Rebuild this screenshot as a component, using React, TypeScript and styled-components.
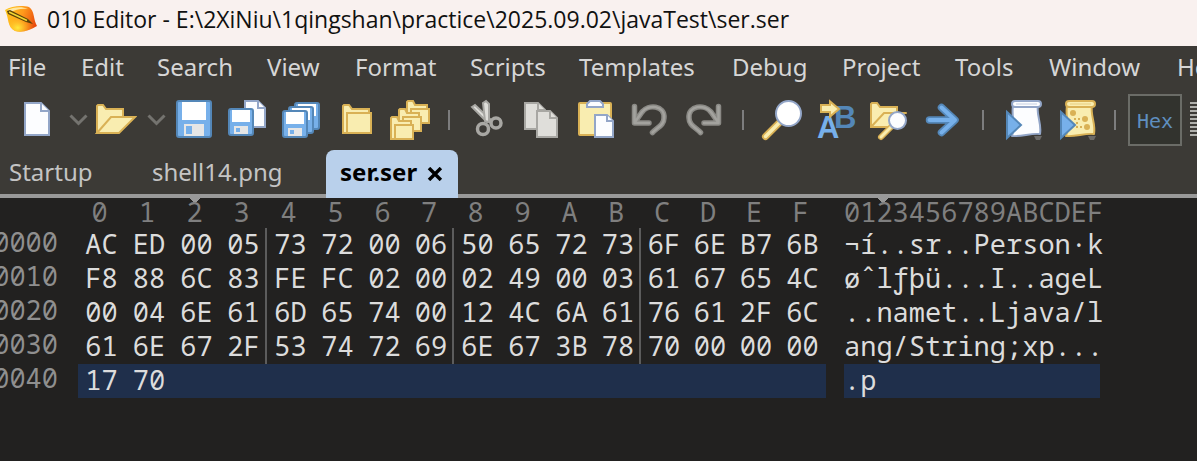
import React from "react";
import styled, { createGlobalStyle } from "styled-components";

const ui = `"Noto Sans", "Open Sans", sans-serif`;
const mono = `"Noto Sans Mono", "Droid Sans Mono", "DejaVu Sans Mono", monospace`;

const blue = "#77b0ea";
const blueEdge = "#5487b8";
const sand = "#f9edb0";
const sandEdge = "#d9b155";
const paper = "#fcfdff";
const paperEdge = "#93a6c8";
const grey = "#dfdeda";
const greyEdge = "#a8a7a3";

const GlobalStyle = createGlobalStyle`
  * { box-sizing: border-box; }
  body { margin: 0; background: #222120; font-family: ${ui}; }
`;

const Window = styled.div`
  display: flex;
  flex-direction: column;
  min-height: 100vh;
  overflow: hidden;
  background: #222120;
`;

const TitleBar = styled.header`
  display: flex;
  align-items: center;
  gap: 10px;
  height: 46px;
  padding: 0 5px 8px;
  background: #f9f1ef;
`;

const Title = styled.h1`
  margin: 0;
  font: 400 23px/36px "Open Sans", sans-serif;
  color: #111;
  white-space: nowrap;
`;

const MenuBar = styled.nav`
  display: grid;
  grid-template-columns: 73px 76px 110px 88px 115px 109px 153px 110px 113px 94px 128px auto;
  justify-content: start;
  height: 44px;
  padding-left: 8px;
  background: #3c3a36;
  overflow: hidden;
`;

const MenuButton = styled.button`
  padding: 0;
  border: 0;
  background: none;
  color: #d6d6d6;
  font: 400 24px/42px ${ui};
  height: 42px;
  text-align: left;
`;

const ToolBar = styled.div`
  display: flex;
  align-items: center;
  height: 60px;
  padding-left: 10px;
  background: #3c3a36;
  overflow: hidden;
`;

const ToolButton = styled.button<{ $narrow?: boolean }>`
  flex: none;
  display: flex;
  justify-content: center;
  width: ${(p) => (p.$narrow ? 24 : 54)}px;
  height: 44px;
  padding: 0;
  border: 0;
  background: none;
`;

const Separator = styled.div`
  flex: none;
  width: 24px;
  height: 20px;
  padding-left: 12px;

  &::before {
    content: "";
    display: block;
    width: 2px;
    height: 100%;
    background: #7d7d7e;
  }
`;

const HexButton = styled.button`
  flex: none;
  width: 54px;
  height: 52px;
  margin: 0 8px 0 2px;
  padding: 2px 0 0;
  border: 2px solid #6b6c67;
  background: #32332e;
  color: #5f8fc0;
  font: 400 20px/46px "DejaVu Sans Mono", monospace;
`;

const Tabs = styled.div`
  display: flex;
  height: 48px;
  background: linear-gradient(#3c3a36 44px, #999 44px);
`;

const Tab = styled.button<{ $active?: boolean }>`
  display: flex;
  align-items: center;
  gap: 9px;
  height: 48px;
  padding: 0 14px 4px;
  border: 0;
  border-radius: 8px 8px 0 0;
  background: ${(p) => (p.$active ? "#b9d0eb" : "none")};
  color: ${(p) => (p.$active ? "#000" : "#c4c4c4")};
  font: ${(p) => (p.$active ? 700 : 400)} 24px/44px ${ui};

  svg { margin-top: 4px; }
`;

const TabList = styled.div`
  display: grid;
  grid-template-columns: 142px 184px 132px;

  button:first-child { padding-left: 9px; }
  button:nth-child(2) { padding-left: 10px; }
`;

const Editor = styled.main`
  flex: 1;
  overflow: hidden;
`;

const Dump = styled.table`
  width: 1100px;
  table-layout: fixed;
  border-collapse: collapse;
  font: 400 27px/32px ${mono};
  color: #dcdcdc;
`;

const ColumnHead = styled.th<{ $text?: boolean; $marked?: boolean }>`
  height: 30px;
  padding: ${(p) => (p.$text ? "0 0 2px" : "0 4px 2px 0")};
  color: #7f7f7f;
  font-weight: 400;
  line-height: 28px;
  text-align: ${(p) => (p.$text ? "left" : "center")};
  white-space: pre;
  background: ${(p) =>
    p.$marked
      ? `conic-gradient(from -45deg at 50% 5px, #999 90deg, transparent 0) ${p.$text ? "34px" : "17px"} 0 / 10px 5px no-repeat`
      : "none"};
`;

const Offset = styled.th`
  height: 34px;
  padding: 0 20px 6px 0;
  color: #8f8f8f;
  font-weight: 400;
  line-height: 28px;
  direction: rtl;
  text-align: right;
`;

const Byte = styled.td<{ $selected: boolean; $divided: boolean }>`
  height: 34px;
  padding: 0 0 2px;
  text-align: center;
  background: ${(p) =>
    p.$selected
      ? "#1f2f4b"
      : p.$divided
        ? "linear-gradient(#5c5c5c, #5c5c5c) right / 2px 100% no-repeat"
        : "none"};
`;

const Text = styled.td<{ $selected: boolean }>`
  height: 34px;
  padding: 0 0 2px;
  white-space: pre;
  background: ${(p) => (p.$selected ? "#1f2f4b" : "none")};
`;

const Icon = ({ children }: { children: React.ReactNode }) => (
  <svg width="44" height="44" viewBox="0 0 44 44" fill="none" aria-hidden="true">
    {children}
  </svg>
);

const Page = ({ x, y, w, h, fill = paper, edge = paperEdge, fold = 7 }: {
  x: number; y: number; w: number; h: number; fill?: string; edge?: string; fold?: number;
}) => (
  <g fill={fill} stroke={edge} strokeWidth="2">
    <path d={`M${x} ${y}h${w - fold}l${fold} ${fold}v${h - fold}h${-w}z`} />
    <path d={`M${x + w - fold} ${y}v${fold}h${fold}`} />
  </g>
);

const Floppy = ({ x, y }: { x: number; y: number }) => (
  <g>
    <rect x={x + 1} y={y + 1} width="24" height="26" rx="2" fill={blue} stroke={blueEdge} strokeWidth="2" />
    <path fill="#fff" d={`M${x + 4} ${y + 2}h18v12h-18z`} />
    <path fill="#e6e6e6" d={`M${x + 6} ${y + 18}h14v8h-14z`} />
    <path fill={blue} d={`M${x + 8} ${y + 20}h4v4h-4z`} />
  </g>
);

const SmallFolder = ({ x, y }: { x: number; y: number }) => (
  <g fill={sand} stroke={sandEdge} strokeWidth="2">
    <path d={`M${x + 1} ${y + 23}v-21l1 -1h5l2 4h12v4h2v14z`} />
    <path d={`M${x + 5} ${y + 9}h18v14h-18z`} />
  </g>
);

const Chevron = () => (
  <svg width="24" height="44" viewBox="0 0 24 44" fill="none" aria-hidden="true">
    <path d="M6.500 17.500L14.500 25.500L22.500 17.500" stroke="#74736f" strokeWidth="3" />
  </svg>
);

const Curl = () => (
  <g strokeLinecap="round" strokeLinejoin="round">
    <path d="M7.500 8.500V25H22M8 24L15 14C21 6 38 7 37 20C37 27 31 29 25.500 34.500" stroke="#8a8985" strokeWidth="5.500" />
    <path d="M7.500 8.500V25H22M8 24L15 14C21 6 38 7 37 20C37 27 31 29 25.500 34.500" stroke="#a3a29e" strokeWidth="2.500" />
  </g>
);

const Scroll = ({ fill, edge }: { fill: string; edge: string }) => (
  <g fill={fill} stroke={edge} strokeWidth="2" strokeLinejoin="round">
    <path d="M14 8C12 18 17 27 13 38C23 39 31 35 41 36C43 26 37 16 39 8Z" />
    <rect x="13" y="3" width="29" height="6" rx="3" />
    <path d="M17 6H38" stroke={edge} strokeWidth="1" opacity=".5" />
  </g>
);

const Play = () => (
  <g>
    <path d="M8 14L22 27L8 40Z" fill={blue} stroke={blueEdge} strokeWidth="2" />
    <path d="M35 38H43L41 42H37Z" fill="#6b6a68" />
  </g>
);

const icons: Record<string, React.ReactNode> = {
  New: <Page x={10} y={5} w={24} h={32} fold={8} />,
  Open: (
    <g fill={sand} stroke={sandEdge} strokeWidth="2">
      <path d="M4 35V8L5 7H10L13 11H30V19H18" />
      <path d="M4 35L18 19H42L26 35Z" />
    </g>
  ),
  Save: (
    <g>
      <rect x="6" y="3" width="34" height="36" rx="2" fill={blue} stroke={blueEdge} strokeWidth="2" />
      <path fill="#fff" d="M11 4H35V22H11Z" />
      <path fill="#e6e6e6" d="M13 26H33V38H13Z" />
      <path fill={blue} d="M15 28H21V36H15Z" />
    </g>
  ),
  "Save As": (
    <>
      <Page x={20} y={3} w={20} h={26} />
      <Floppy x={3} y={10} />
    </>
  ),
  "Save All": (
    <>
      <Floppy x={15} y={4} />
      <Floppy x={9} y={8} />
      <Floppy x={3} y={12} />
    </>
  ),
  "Open Folder": (
    <g fill={sand} stroke={sandEdge} strokeWidth="2">
      <path d="M10 35V8L11 7H16L19 11H36V15H38V35Z" />
      <path d="M14 15H38V35H14Z" />
    </g>
  ),
  "Open All": (
    <>
      <SmallFolder x={19} y={2} />
      <SmallFolder x={11} y={10} />
      <SmallFolder x={3} y={18} />
    </>
  ),
  Cut: (
    <g>
      <path d="M7 9L10 7L26 22L22 24Z" fill={grey} stroke={greyEdge} strokeWidth="2" />
      <path d="M18 5L21 3L24 6V24L20 23Z" fill={grey} stroke={greyEdge} strokeWidth="2" />
      <circle cx="18" cy="31" r="5.500" stroke={greyEdge} strokeWidth="3.500" />
      <circle cx="31" cy="25" r="5" stroke={greyEdge} strokeWidth="3.500" />
    </g>
  ),
  Copy: (
    <>
      <Page x={6} y={5} w={20} h={26} fill={grey} edge={greyEdge} />
      <Page x={18} y={13} w={20} h={26} fill={grey} edge={greyEdge} />
    </>
  ),
  Paste: (
    <g>
      <rect x="6" y="5" width="32" height="32" rx="1" fill={sand} stroke={sandEdge} strokeWidth="2" />
      <path d="M14 9V6L17 3H27L30 6V9Z" fill={paper} stroke={paperEdge} strokeWidth="2" />
      <Page x={22} y={17} w={18} h={22} fold={6} />
    </g>
  ),
  Undo: <Curl />,
  Redo: (
    <g transform="matrix(-1 0 0 1 45 0)">
      <Curl />
    </g>
  ),
  Find: (
    <g strokeLinecap="round">
      <path d="M6.500 38.500L20 25" stroke={sandEdge} strokeWidth="7" />
      <path d="M6.500 38.500L20 25" stroke={sand} strokeWidth="3.500" />
      <circle cx="29.500" cy="15.500" r="12.500" fill="#fff" stroke={paperEdge} strokeWidth="2" />
    </g>
  ),
  Replace: (
    <g fontFamily="Liberation Sans, Arial, sans-serif" fontSize="31" fontWeight="700">
      <text x="21" y="30" fill={blueEdge}>B</text>
      <text x="4" y="40" fill={blue}>A</text>
      <path d="M8 7H17V3.500L26 11L17 18.500V14H8Z" fill={sand} stroke={sandEdge} strokeWidth="2" />
    </g>
  ),
  "Find in Files": (
    <g strokeLinecap="round">
      <g fill={sand} stroke={sandEdge} strokeWidth="2">
        <path d="M4 29V6L5 5H10L13 9H30V29Z" />
        <path d="M4 29L17 15H39" />
      </g>
      <path d="M14 39L24 29" stroke={sandEdge} strokeWidth="6" />
      <path d="M14 39L24 29" stroke={sand} strokeWidth="3" />
      <circle cx="30.500" cy="22.500" r="8.500" fill={paper} stroke={paperEdge} strokeWidth="2" />
    </g>
  ),
  Goto: (
    <g strokeLinecap="round" strokeLinejoin="round">
      <path d="M8.500 22H33M20.500 9.500L34 22L20.500 34.500" stroke={blueEdge} strokeWidth="7.500" />
      <path d="M8.500 22H33M20.500 9.500L34 22L20.500 34.500" stroke={blue} strokeWidth="4" />
    </g>
  ),
  "Run Script": (
    <>
      <Scroll fill={paper} edge={paperEdge} />
      <Play />
    </>
  ),
  "Run Template": (
    <>
      <Scroll fill={sand} edge={sandEdge} />
      <g fill={sandEdge}>
        <circle cx="20" cy="15" r="3" />
        <circle cx="32" cy="21" r="3" />
        <circle cx="34" cy="29" r="3" />
        <path d="M21 20h2v2h-2zM25 20h2v2h-2zM23 24h2v2h-2zM23 28h2v2h-2zM27 28h2v2h-2z" />
      </g>
      <Play />
    </>
  ),
};

const tools = [
  "New", ">", "Open", ">", "Save", "Save As", "Save All", "Open Folder", "Open All", "|",
  "Cut", "Copy", "Paste", "Undo", "Redo", "|",
  "Find", "Replace", "Find in Files", "Goto", "|",
  "Run Script", "Run Template", "|",
];

const menus = [
  "File", "Edit", "Search", "View", "Format", "Scripts", "Templates",
  "Debug", "Project", "Tools", "Window", "Help",
];

const columns = "0123456789ABCDEF".split("");
const columnWidths = [47, 48, 47, 47, 47, 47, 47, 46, 47, 47, 47, 46, 46, 46, 46, 47];

const rows = [
  { offset: "0000", bytes: "AC ED 00 05 73 72 00 06 50 65 72 73 6F 6E B7 6B", text: "¬í..sr..Person·k" },
  { offset: "0010", bytes: "F8 88 6C 83 FE FC 02 00 02 49 00 03 61 67 65 4C", text: "øˆlƒþü...I..ageL" },
  { offset: "0020", bytes: "00 04 6E 61 6D 65 74 00 12 4C 6A 61 76 61 2F 6C", text: "..namet..Ljava/l" },
  { offset: "0030", bytes: "61 6E 67 2F 53 74 72 69 6E 67 3B 78 70 00 00 00", text: "ang/String;xp..." },
  { offset: "0040", bytes: "17 70", text: ".p", selected: true },
];

const Logo = () => (
  <svg width="32" height="28" viewBox="0 0 32 28" aria-hidden="true">
    <defs>
      <linearGradient id="leaf" x1="0" y1="0.300" x2="1" y2="0.600">
        <stop offset="0" stopColor="#ffc61a" />
        <stop offset=".5" stopColor="#ff9a1c" />
        <stop offset="1" stopColor="#e8480c" />
      </linearGradient>
      <radialGradient id="glow" cx=".4" cy=".85" r=".5">
        <stop offset="0" stopColor="#ffe93c" />
        <stop offset="1" stopColor="#ffb01a" stopOpacity="0" />
      </radialGradient>
    </defs>
    <path d="M0 5C6 1 17 0 24 2C30 6 28 14 32 21C25 25 18 28 10 26C2 22 4 13 0 5Z" fill="url(#leaf)" />
    <path d="M0 5C6 1 17 0 24 2C30 6 28 14 32 21C25 25 18 28 10 26C2 22 4 13 0 5Z" fill="url(#glow)" />
    <path d="M2 5C8 2 17 1 23 4C16 3 10 5 6 7Z" fill="#ffe7a0" />
    <path d="M2 6L5 5L23 14L28 19L21 17L3 9Z" fill="#5a4208" />
    <path d="M4 7L22 15.500" stroke="#f1d532" strokeWidth="1.800" />
  </svg>
);

export default function App() {
  return (
    <Window>
      <GlobalStyle />
      <TitleBar>
        <Logo />
        <Title>010 Editor - E:\2XiNiu\1qingshan\practice\2025.09.02\javaTest\ser.ser</Title>
      </TitleBar>
      <MenuBar>
        {menus.map((name) => (
          <MenuButton key={name}>{name}</MenuButton>
        ))}
      </MenuBar>
      <ToolBar>
        {tools.map((name, i) =>
          name === "|" ? (
            <Separator key={i} />
          ) : name === ">" ? (
            <ToolButton key={i} $narrow aria-label={`${tools[i - 1]} options`}>
              <Chevron />
            </ToolButton>
          ) : (
            <ToolButton key={i} aria-label={name}>
              <Icon>{icons[name]}</Icon>
            </ToolButton>
          ),
        )}
        <HexButton>Hex</HexButton>
        <ToolButton aria-label="Line view">
          <svg width="54" height="44" viewBox="0 0 54 44" aria-hidden="true">
            <path d="M0 5H36M0 9H36M0 13H36M0 17H36M0 21H36M0 25H36M0 29H36M0 33H36M0 37H36" stroke="#b0b0ac" strokeWidth="2" />
          </svg>
        </ToolButton>
      </ToolBar>
      <Tabs>
        <TabList>
          <Tab>Startup</Tab>
          <Tab>shell14.png</Tab>
          <Tab $active>
            ser.ser
            <svg width="18" height="14" viewBox="0 0 18 14" aria-hidden="true">
              <path d="M3 1L15 13M15 1L3 13" stroke="#000" strokeWidth="3.500" />
            </svg>
          </Tab>
        </TabList>
      </Tabs>
      <Editor>
        <Dump>
          <colgroup>
            <col style={{ width: 78 }} />
            {columns.map((c, i) => (
              <col key={c} style={{ width: columnWidths[i] }} />
            ))}
            <col style={{ width: 18 }} />
            <col style={{ width: 256 }} />
          </colgroup>
          <thead>
            <tr>
              <td />
              {columns.map((c) => (
                <ColumnHead key={c} scope="col" $marked={c === "2"}>{c}</ColumnHead>
              ))}
              <td />
              <ColumnHead scope="col" $text $marked>{columns.join("")}</ColumnHead>
            </tr>
          </thead>
          <tbody>
            {rows.map((row) => {
              const bytes = row.bytes.split(" ");
              return (
                <tr key={row.offset}>
                  <Offset scope="row">{row.offset}</Offset>
                  {columns.map((c, i) => (
                    <Byte key={c} $selected={!!row.selected} $divided={i % 4 === 3 && i < 15}>
                      {bytes[i]}
                    </Byte>
                  ))}
                  <td />
                  <Text $selected={!!row.selected}>{row.text}</Text>
                </tr>
              );
            })}
          </tbody>
        </Dump>
      </Editor>
    </Window>
  );
}
